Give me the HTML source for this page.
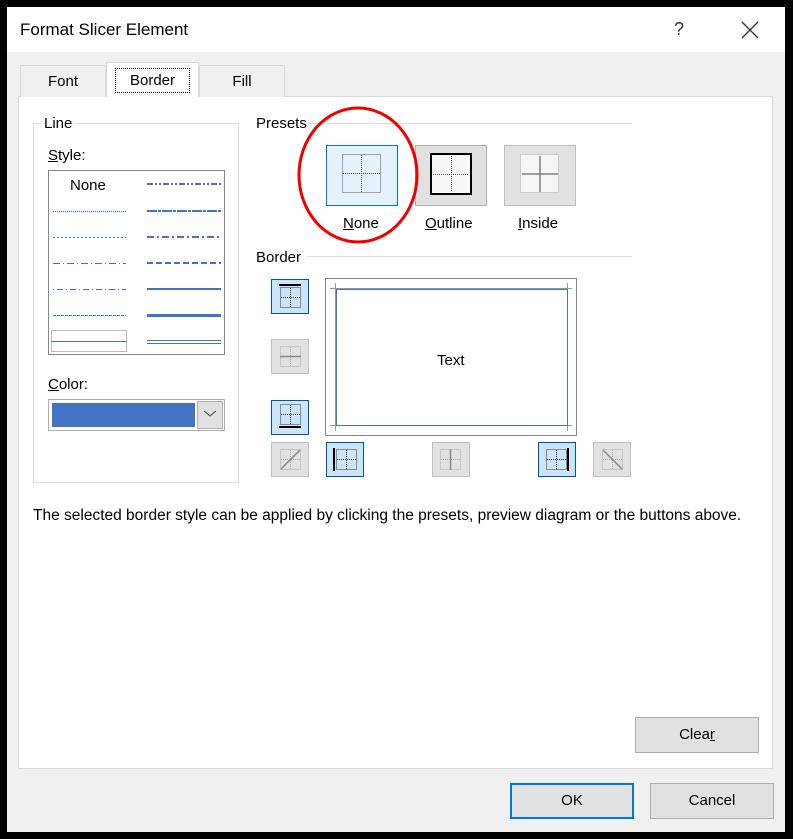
<!DOCTYPE html>
<html><head><meta charset="utf-8"><style>
*{margin:0;padding:0;box-sizing:border-box}
body{width:793px;height:839px;background:#000;position:relative;overflow:hidden;font-family:"Liberation Sans",sans-serif;font-size:14px;color:#000}
.a{position:absolute}
.dlg{left:7px;top:7px;width:778px;height:825px;background:#f0f0f0}
.title{left:7px;top:7px;width:778px;height:45px;background:#fff}
.panel{left:18px;top:96px;width:755px;height:673px;background:#fff;border:1px solid #d9d9d9}
.tab{height:32px;border:1px solid #d9d9d9;border-bottom:none;background:#f0f0f0;text-align:center;line-height:32px;font-size:15px}
.grp{border:1px solid #dcdcdc}
.lbl{font-size:15px;background:#fff;padding:0 2px}
.btn{border:1px solid #adadad;background:#e1e1e1;text-align:center;font-size:15px}
.sb{width:38px;height:35px}
.sel{background:#cce4f7;border:1px solid #005499}
.dis{background:#e1e1e1;border:1px solid #bfbfbf}
u{text-decoration:underline}
</style></head><body>
<div class="a dlg"></div>
<div class="a title"></div>
<div class="a" style="left:20px;top:20px;font-size:17px">Format Slicer Element</div>
<div class="a" style="left:674px;top:19px;font-size:18px;color:#333">?</div>
<svg class="a" style="left:741px;top:21px" width="18" height="18"><path d="M1 1L17 17M17 1L1 17" stroke="#333" stroke-width="1.3"/></svg>

<div class="a panel"></div>
<div class="a tab" style="left:20px;top:65px;width:86px">Font</div>
<div class="a tab" style="left:106px;top:62px;width:93px;height:35px;background:#fff;line-height:36px"><span style="border:1px dotted #000;padding:3px 14px">Border</span></div>
<div class="a tab" style="left:199px;top:65px;width:86px">Fill</div>

<!-- Line group -->
<div class="a grp" style="left:33px;top:123px;width:206px;height:360px"></div>
<div class="a lbl" style="left:42px;top:115px">Line</div>
<div class="a" style="left:48px;top:147px;font-size:15px"><u>S</u>tyle:</div>
<div class="a" style="left:48px;top:170px;width:177px;height:185px;border:1px solid #828790;background:#fff"></div>
<div class="a" style="left:70px;top:177px;font-size:15px">None</div>
<svg class="a" style="left:49px;top:171px" width="175" height="183">
<g stroke="#4472c4" fill="none">
<line x1="4" y1="40.5" x2="77" y2="40.5" stroke-dasharray="1 1"/>
<line x1="4" y1="66.5" x2="77" y2="66.5" stroke-dasharray="2 2"/>
<line x1="4" y1="92.5" x2="77" y2="92.5" stroke-dasharray="7 3 1 3"/>
<line x1="4" y1="118.5" x2="77" y2="118.5" stroke-dasharray="1 3 6 3"/>
<line x1="4" y1="144.5" x2="77" y2="144.5" stroke-dasharray="3 1"/>
<line x1="2" y1="170.5" x2="78" y2="170.5"/>
<line x1="98" y1="13" x2="172" y2="13" stroke-width="2" stroke-dasharray="6 2 2 2 2 2"/>
<line x1="98" y1="40" x2="172" y2="40" stroke-width="2" stroke-dasharray="10 1 3 1"/>
<line x1="98" y1="66" x2="172" y2="66" stroke-width="2" stroke-dasharray="7 3 2 3"/>
<line x1="98" y1="92" x2="172" y2="92" stroke-width="2" stroke-dasharray="6 3"/>
<line x1="98" y1="118" x2="172" y2="118" stroke-width="2"/>
<line x1="98" y1="144.5" x2="172" y2="144.5" stroke-width="3"/>
<line x1="98" y1="169.5" x2="172" y2="169.5"/>
<line x1="98" y1="172.5" x2="172" y2="172.5"/>
</g>
<rect x="2.5" y="159.5" width="75" height="21" fill="none" stroke="#777" stroke-dasharray="1 1"/>
</svg>
<div class="a" style="left:48px;top:376px;font-size:15px"><u>C</u>olor:</div>
<div class="a" style="left:48px;top:399px;width:177px;height:32px;border:1px solid #adadad;background:#fff"></div>
<div class="a" style="left:52px;top:403px;width:143px;height:24px;background:#4472c4"></div>
<div class="a" style="left:197px;top:401px;width:26px;height:28px;background:#e1e1e1;border:1px solid #adadad"></div>
<svg class="a" style="left:203px;top:410px" width="14" height="8"><path d="M1 1L7 6L13 1" stroke="#444" fill="none"/></svg>

<!-- Presets -->
<div class="a" style="left:300px;top:123px;width:332px;height:1px;background:#dcdcdc"></div>
<div class="a lbl" style="left:254px;top:115px">Presets</div>
<div class="a" style="left:326px;top:145px;width:72px;height:61px;background:#e5f1fb;border:1px solid #0078d7"></div>
<svg class="a" style="left:341px;top:153px" width="42" height="42"><g fill="none" stroke="#555" stroke-dasharray="1 1"><rect x="1.5" y="1.5" width="38" height="38"/><line x1="20.5" y1="2" x2="20.5" y2="39"/><line x1="2" y1="20.5" x2="39" y2="20.5"/></g></svg>
<div class="a" style="left:415px;top:145px;width:72px;height:61px;background:#e1e1e1;border:1px solid #adadad"></div>
<svg class="a" style="left:430px;top:153px" width="42" height="42"><rect x="1" y="1" width="40" height="40" fill="#f8f8f8" stroke="#000" stroke-width="2"/><g stroke="#555" stroke-dasharray="1 1"><line x1="21.5" y1="3" x2="21.5" y2="39"/><line x1="3" y1="21.5" x2="39" y2="21.5"/></g></svg>
<div class="a" style="left:504px;top:145px;width:72px;height:61px;background:#e1e1e1;border:1px solid #bfbfbf"></div>
<svg class="a" style="left:519px;top:153px" width="42" height="42"><rect x="1.5" y="1.5" width="38" height="38" fill="#f5f5f5" stroke="#aaa" stroke-dasharray="1 1"/><g stroke="#808080" stroke-width="1.5"><line x1="21" y1="3" x2="21" y2="39"/><line x1="3" y1="21" x2="39" y2="21"/></g></svg>
<div class="a" style="left:343px;top:215px;font-size:15px"><u>N</u>one</div>
<div class="a" style="left:425px;top:215px;font-size:15px"><u>O</u>utline</div>
<div class="a" style="left:518px;top:215px;font-size:15px"><u>I</u>nside</div>
<svg class="a" style="left:290px;top:100px" width="140" height="150"><ellipse cx="68" cy="75" rx="59" ry="67" fill="none" stroke="#e00" stroke-width="3"/></svg>

<!-- Border -->
<div class="a" style="left:307px;top:256px;width:325px;height:1px;background:#dcdcdc"></div>
<div class="a lbl" style="left:254px;top:249px">Border</div>

<div class="a sb sel" style="left:271px;top:279px"></div>
<div class="a sb dis" style="left:271px;top:339px"></div>
<div class="a sb sel" style="left:271px;top:400px"></div>
<div class="a sb dis" style="left:271px;top:442px"></div>
<div class="a sb sel" style="left:326px;top:442px"></div>
<div class="a sb dis" style="left:432px;top:442px"></div>
<div class="a sb sel" style="left:538px;top:442px"></div>
<div class="a sb dis" style="left:593px;top:442px"></div>
<svg class="a" style="left:0;top:0" width="793" height="839">
<defs><g id="ic"><rect x="0.5" y="0.5" width="20" height="20" fill="none" stroke-dasharray="1 1"/><line x1="10.5" y1="1" x2="10.5" y2="20" stroke-dasharray="1 1"/><line x1="1" y1="10.5" x2="20" y2="10.5" stroke-dasharray="1 1"/></g></defs>
<g stroke="#333"><use href="#ic" x="280" y="287"/><line x1="279" y1="285" x2="301" y2="285" stroke="#000" stroke-width="2"/></g>
<g stroke="#aaa"><use href="#ic" x="280" y="346"/><line x1="280" y1="356.5" x2="301" y2="356.5" stroke="#888" stroke-width="1.5"/></g>
<g stroke="#333"><use href="#ic" x="280" y="404"/><line x1="279" y1="427" x2="301" y2="427" stroke="#000" stroke-width="2"/></g>
<g stroke="#aaa"><use href="#ic" x="280" y="449"/><line x1="281" y1="469" x2="300" y2="450" stroke="#888" stroke-width="1.5"/></g>
<g stroke="#333"><use href="#ic" x="336" y="449"/><line x1="334" y1="448" x2="334" y2="471" stroke="#000" stroke-width="2"/></g>
<g stroke="#aaa"><use href="#ic" x="440" y="449"/><line x1="450.5" y1="449" x2="450.5" y2="470" stroke="#888" stroke-width="1.5"/></g>
<g stroke="#333"><use href="#ic" x="546" y="449"/><line x1="568" y1="448" x2="568" y2="471" stroke="#000" stroke-width="2"/></g>
<g stroke="#aaa"><use href="#ic" x="602" y="449"/><line x1="603" y1="450" x2="622" y2="469" stroke="#888" stroke-width="1.5"/></g>
</svg>
<div class="a" style="left:325px;top:278px;width:252px;height:158px;border:1px solid #828790;background:#fff"></div>
<svg class="a" style="left:326px;top:279px" width="250" height="156"><g stroke="#999"><line x1="9.5" y1="4" x2="9.5" y2="152"/><line x1="241.5" y1="4" x2="241.5" y2="152"/><line x1="4" y1="9.5" x2="246" y2="9.5"/><line x1="4" y1="146.5" x2="246" y2="146.5"/></g><rect x="10.5" y="10.5" width="231" height="136" fill="none" stroke="#4472c4"/></svg>
<div class="a" style="left:437px;top:352px;font-size:15px">Text</div>

<div class="a" style="left:33px;top:507px;font-size:15.5px;white-space:nowrap">The selected border style can be applied by clicking the presets, preview diagram or the buttons above.</div>

<div class="a btn" style="left:635px;top:717px;width:124px;height:36px;line-height:34px">Clea<u>r</u></div>
<div class="a btn" style="left:510px;top:783px;width:124px;height:36px;line-height:32px;border:2px solid #0078d7">OK</div>
<div class="a btn" style="left:650px;top:783px;width:124px;height:36px;line-height:34px">Cancel</div>
</body></html>
